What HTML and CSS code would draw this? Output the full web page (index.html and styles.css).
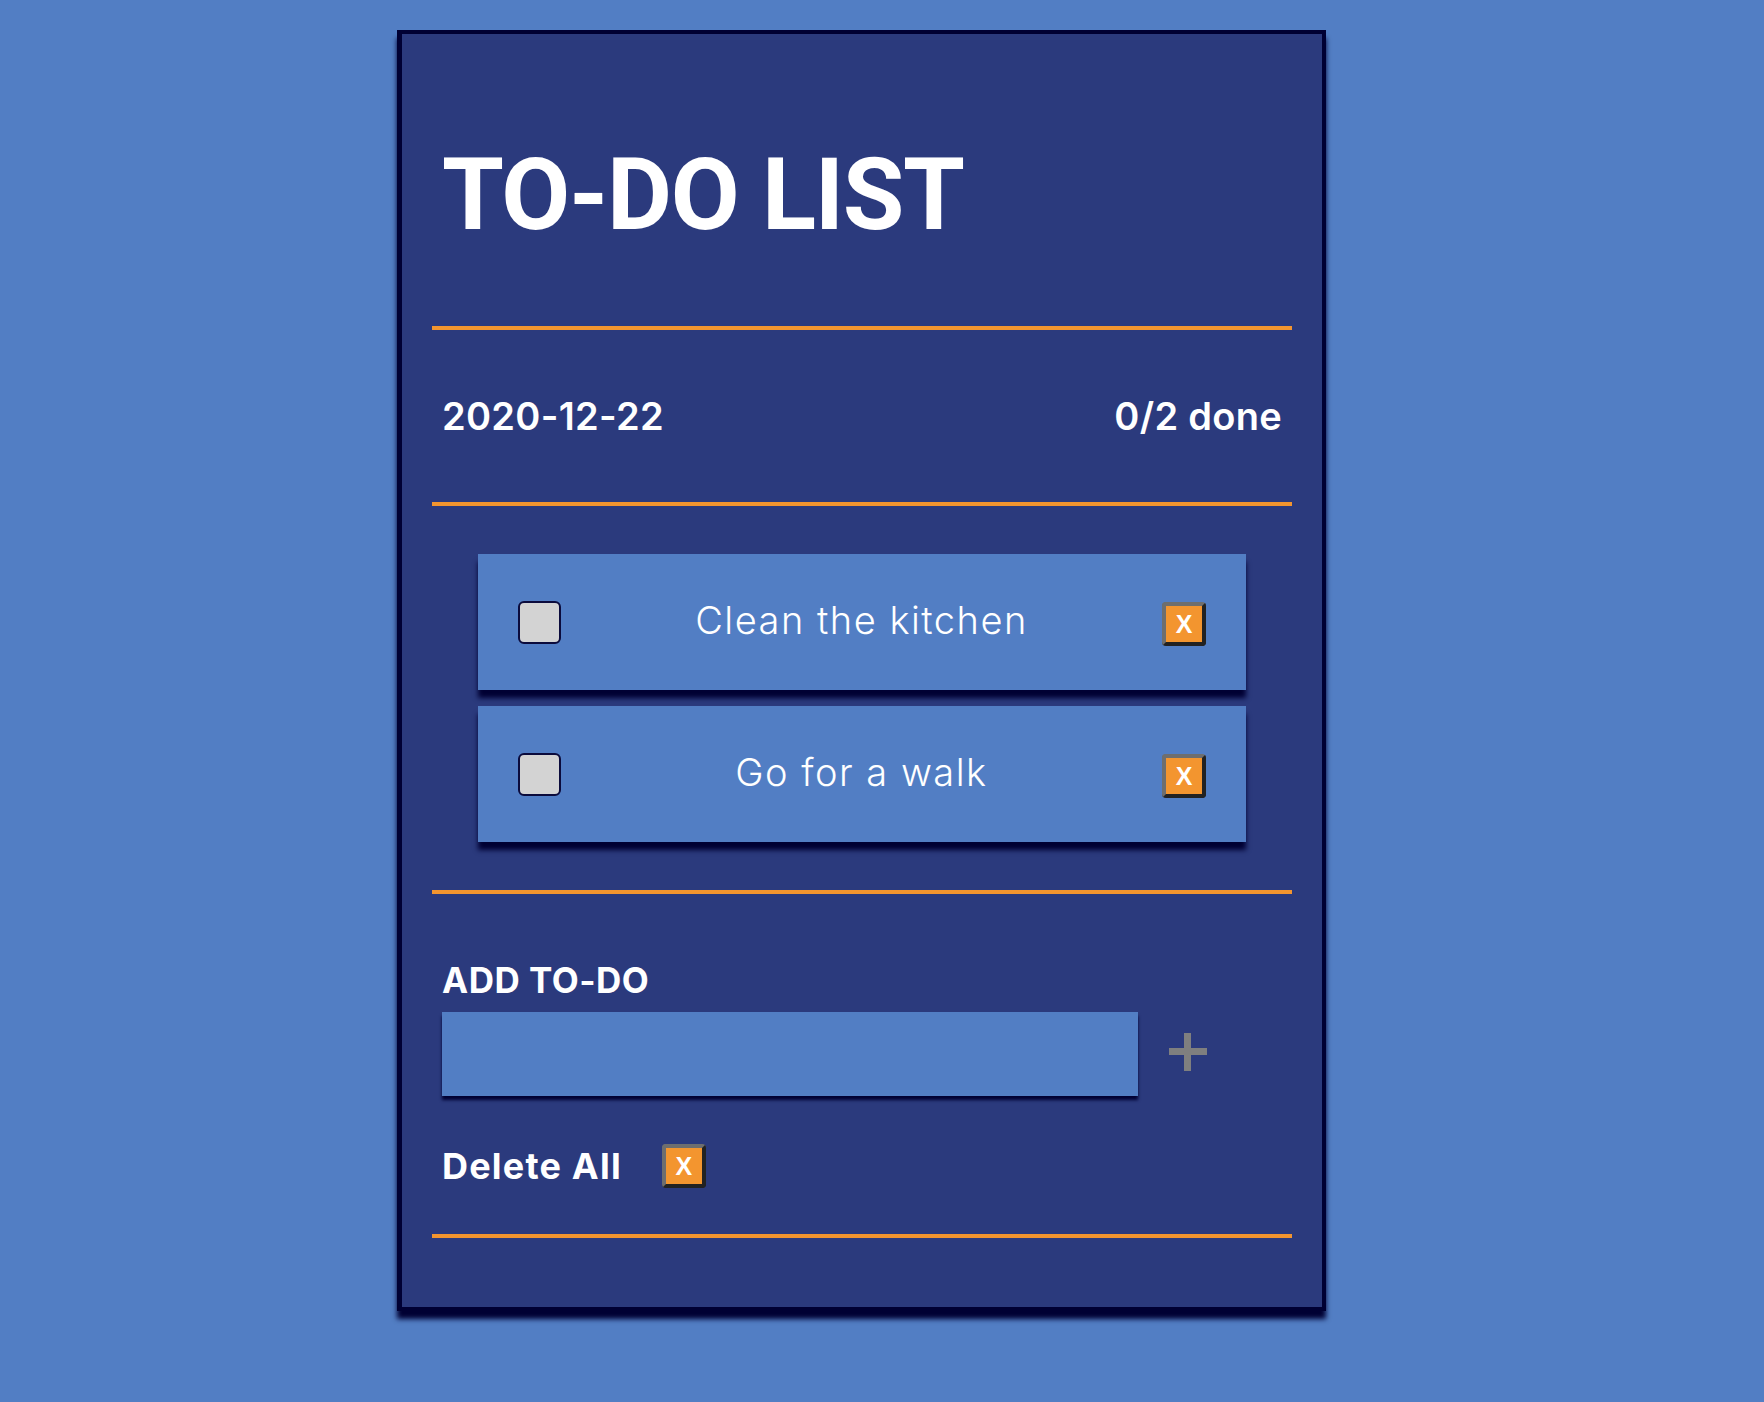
FILE: index.html
```html
<!DOCTYPE html>
<html lang="en">
<head>
<meta charset="utf-8">
<title>To-Do List</title>
<link rel="stylesheet" href="styles.css">
</head>
<body>
<div class="page">
  <main class="card">
    <header class="header">
      <h1 class="title">TO-DO LIST</h1>
    </header>
    <hr class="rule">
    <div class="status">
      <span class="date">2020-12-22</span>
      <span class="count">0/2 done</span>
    </div>
    <hr class="rule">
    <ul class="tasks">
      <li class="task">
        <span class="check"></span>
        <span class="task-text">Clean the kitchen</span>
        <button class="xbtn">X</button>
      </li>
      <li class="task">
        <span class="check"></span>
        <span class="task-text">Go for a walk</span>
        <button class="xbtn">X</button>
      </li>
    </ul>
    <hr class="rule">
    <section class="add">
      <h2 class="add-label">ADD TO-DO</h2>
      <div class="add-row">
        <div class="add-input"></div>
        <button class="plus" aria-label="Add">
          <svg width="38" height="38" viewBox="0 0 38 38"><rect x="15" y="0" width="7" height="38" fill="#7f7f7f"/><rect x="0" y="15" width="38" height="7" fill="#7f7f7f"/></svg>
        </button>
      </div>
      <div class="delete-row">
        <span class="delete-label">Delete All</span>
        <button class="xbtn">X</button>
      </div>
    </section>
    <hr class="rule">
    <div class="footer"></div>
  </main>
</div>
</body>
</html>
```
FILE: styles.css
```css
* { box-sizing: border-box; }
html, body { margin: 0; padding: 0; }
body {
  background: #527ec4;
  font-family: Inter, "Liberation Sans", sans-serif;
  color: #fff;
}
.page {
  padding: 30px 0 0 397px;
  min-height: 1402px;
}
.card {
  width: 929px;
  background: #2b3a7d;
  border: 4px solid #000033;
  border-left-width: 5px;
  box-shadow: 0 8px 5px #000033;
  display: flex;
  flex-direction: column;
}
.header {
  padding: 111px 40px 0;
  height: 292px;
}
.title {
  margin: 0;
  font-family: Roboto, Inter, sans-serif;
  font-size: 100px;
  line-height: 1;
  font-weight: 700;
  letter-spacing: -1.3px;
}
.rule {
  margin: 0 30px;
  border: 0;
  height: 4px;
  background: #f3952f;
}
.status {
  height: 172px;
  display: flex;
  align-items: center;
  justify-content: space-between;
  padding: 0 40px 0 40px;
  font-size: 38px;
  font-weight: 600;
  line-height: 1;
}
.date { letter-spacing: 0.3px; }
.count { letter-spacing: 0.3px; }
.tasks {
  list-style: none;
  margin: 0;
  padding: 48px 76px;
  display: flex;
  flex-direction: column;
  gap: 16px;
}
.task {
  height: 136px;
  background: #527ec4;
  box-shadow: 0 8px 5px #000033;
  display: flex;
  align-items: center;
  padding: 0 40px;
}
.check {
  width: 43px;
  height: 43px;
  background: #d3d3d3;
  border: 2px solid #0b0b3c;
  border-radius: 6px;
  flex: none;
}
.task-text {
  flex: 1;
  text-align: center;
  font-size: 38px;
  font-weight: 300;
  letter-spacing: 1.5px;
  line-height: 1;
  margin-bottom: 4px;
}
.xbtn {
  flex: none;
  width: 44px;
  height: 44px;
  padding: 0;
  background: #f3952f;
  border: 4px solid;
  border-color: #6e6e6e #222 #222 #6e6e6e;
  border-radius: 4px;
  color: #fff;
  font-family: "Liberation Sans", Arial, sans-serif;
  font-weight: 700;
  font-size: 25px;
  line-height: 1;
  display: flex;
  align-items: center;
  justify-content: center;
  margin-top: 4px;
}
.add {
  padding: 69px 40px 46px;
}
.add-label {
  margin: 0 0 14px;
  font-size: 35px;
  line-height: 1;
  font-weight: 700;
  letter-spacing: 0.5px;
}
.add-row {
  display: flex;
  align-items: center;
}
.add-input {
  width: 696px;
  height: 84px;
  background: #527ec4;
  box-shadow: 0 4px 3px #000033;
}
.plus {
  margin-left: 31px;
  padding: 0;
  border: 0;
  background: none;
  width: 38px;
  height: 38px;
  display: flex;
  margin-top: -4px;
}
.delete-row {
  margin-top: 48px;
  height: 44px;
  display: flex;
  align-items: center;
  gap: 40px;
}
.delete-row .xbtn { margin-top: 0; }
.delete-label {
  font-size: 36px;
  font-weight: 700;
  line-height: 1;
  letter-spacing: 1.2px;
}
.footer {
  height: 69px;
}
```
